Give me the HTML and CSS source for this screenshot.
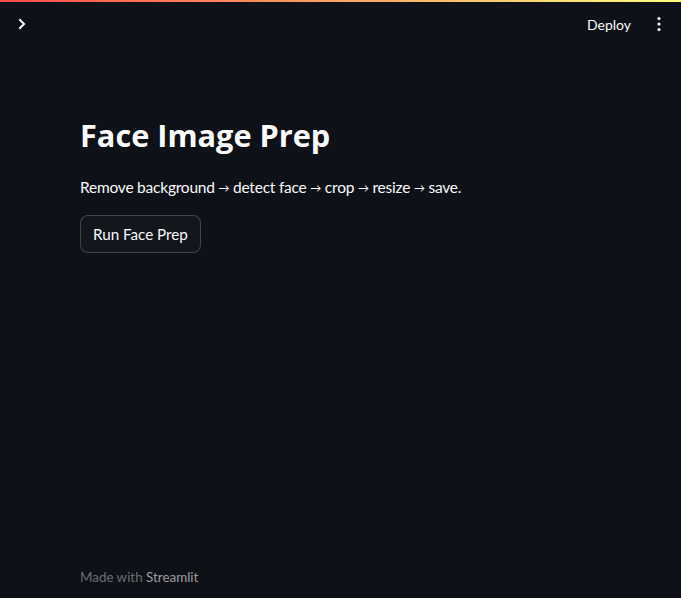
FILE: index.html
```html
<!DOCTYPE html>
<html>
<head>
<meta charset="utf-8">
<link rel="stylesheet" href="styles.css">
</head>
<body>
<div class="app">
  <div class="decoration"></div>
  <header class="header">
    <button class="sidebar-toggle" aria-label="Open sidebar">
      <svg width="16" height="16" viewBox="0 0 16 16"><path d="M6 4l4 4-4 4" fill="none" stroke="#fafafa" stroke-width="2" stroke-linecap="square" stroke-linejoin="miter"/></svg>
    </button>
    <div class="actions">
      <span class="deploy">Deploy</span>
      <button class="menu" aria-label="Main menu">
        <svg width="16" height="16" viewBox="0 0 16 16"><circle cx="8" cy="2.5" r="1.6" fill="#fafafa"/><circle cx="8" cy="8" r="1.6" fill="#fafafa"/><circle cx="8" cy="13.5" r="1.6" fill="#fafafa"/></svg>
      </button>
    </div>
  </header>
  <main class="main">
    <h1 class="title">Face Image Prep</h1>
    <p class="text">Remove background <span class="arrow">→</span> detect face <span class="arrow">→</span> crop <span class="arrow">→</span> resize <span class="arrow">→</span> save.</p>
    <button class="btn">Run Face Prep</button>
  </main>
  <footer class="footer">Made with <span class="brand">Streamlit</span></footer>
</div>
</body>
</html>
```
FILE: styles.css
```css
html, body {
  margin: 0;
  padding: 0;
  background: #0e1117;
  color: #fafafa;
  font-family: "Lato", "Noto Sans", sans-serif;
}
.app {
  height: 598px;
  display: flex;
  flex-direction: column;
  overflow: hidden;
}
.decoration {
  height: 2px;
  background: linear-gradient(90deg, #ff4b4b, #fffd80);
}
.header {
  height: 44px;
  display: flex;
  align-items: center;
  justify-content: space-between;
  padding: 0 14px;
}
.sidebar-toggle, .menu {
  background: none;
  border: none;
  padding: 0;
  display: flex;
  align-items: center;
  justify-content: center;
  width: 16px;
  height: 16px;
}
.actions {
  display: flex;
  align-items: center;
  gap: 20px;
}
.deploy {
  font-size: 14px;
}
.main {
  flex: 1;
  padding: 69px 80px 0;
}
.title {
  margin: 0;
  font-family: "Open Sans", "Lato", sans-serif;
  font-size: 30.7px;
  font-weight: 700;
  line-height: 40px;
}
.text {
  margin: 20px 0 0;
  font-size: 15.5px;
  letter-spacing: -0.22px;
  line-height: 24px;
}
.arrow {
  font-size: 11px;
  vertical-align: 1px;
}
.btn {
  margin-top: 15px;
  height: 38px;
  padding: 0 12px;
  background: #13161d;
  border: 1px solid rgba(250,250,250,0.2);
  border-radius: 8px;
  color: #fafafa;
  font-family: inherit;
  font-size: 15.2px;
}
.footer {
  padding: 0 80px 11px;
  font-size: 13.4px;
  line-height: 20px;
  color: rgba(250,250,250,0.4);
}
.brand {
  color: rgba(250,250,250,0.6);
}
```
